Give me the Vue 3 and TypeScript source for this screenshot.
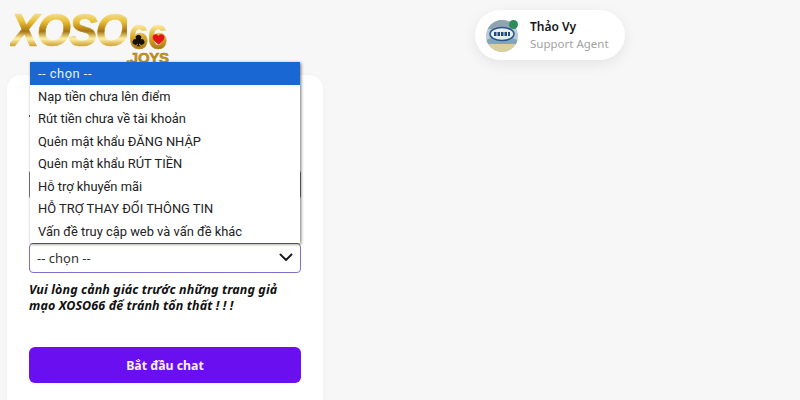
<script setup lang="ts">
const options: string[] = [
  '-- chọn --',
  'Nạp tiền chưa lên điểm',
  'Rút tiền chưa về tài khoản',
  'Quên mật khẩu ĐĂNG NHẬP',
  'Quên mật khẩu RÚT TIỀN',
  'Hỗ trợ khuyến mãi',
  'HỖ TRỢ THAY ĐỔI THÔNG TIN',
  'Vấn đề truy cập web và vấn đề khác',
]
</script>

<template>
  <div class="page">
    <section class="left">
      <div class="logo">
        <span class="six">66</span>
        <span class="xoso">XOSO</span>
        <svg class="suit club" viewBox="0 0 20 20"><path d="M10 1a4.400 4.400 0 0 0-3.600 7A4.400 4.400 0 1 0 9 14.500C8.800 16.500 8 18 6.500 19h7C12 18 11.200 16.500 11 14.500A4.400 4.400 0 1 0 13.600 8 4.400 4.400 0 0 0 10 1z" fill="#15110a"/></svg>
        <svg class="suit heart" viewBox="0 0 20 20"><path d="M10 18C4 13 1 10 1 6.500 1 3.500 3.300 2 5.500 2 7.500 2 9 3 10 5c1-2 2.500-3 4.500-3C16.700 2 19 3.500 19 6.500 19 10 16 13 10 18z" fill="#e5141c"/></svg>
        <span class="joys">.JOYS</span>
      </div>

      <form class="card">
        <div class="hidden-input"></div>
        <div class="label-stub"></div>
        <div class="select">
          <span>-- chọn --</span>
          <svg viewBox="0 0 16 16" class="chev"><path d="M2.500 5.500 8 11l5.500-5.500" fill="none" stroke="#1a1a1a" stroke-width="1.900" stroke-linecap="round" stroke-linejoin="round"/></svg>
        </div>
        <p class="warn">Vui lòng cảnh giác trước những trang giả mạo XOSO66 để tránh tổn thất ! ! !</p>
        <button type="button" class="start">Bắt đầu chat</button>
      </form>

      <ul class="dropdown">
        <li v-for="(o, i) in options" :key="o" :class="{ active: i === 0 }">{{ o }}</li>
      </ul>
    </section>

    <section class="right">
      <div class="agent">
        <div class="avatar">
          <svg viewBox="0 0 32 32" class="avatar-img">
            <defs><clipPath id="av"><circle cx="16" cy="16" r="16"/></clipPath></defs>
            <g clip-path="url(#av)">
              <rect width="32" height="32" fill="#b8ccd6"/>
              <path d="M0 0h32v9H0z" fill="#8fa4b0"/>
              <path d="M0 22h32v10H0z" fill="#d9cf9f"/>
              <path d="M0 20c8-4 22-4 32 0v4H0z" fill="#7fa6bd"/>
              <ellipse cx="16" cy="14" rx="12" ry="6.500" fill="#e9edf0" stroke="#27558f" stroke-width="1.500"/>
              <path d="M8 14h16" stroke="#1f4a86" stroke-width="4" stroke-dasharray="2.500 1"/>
            </g>
          </svg>
          <span class="online"></span>
        </div>
        <div class="agent-text">
          <div class="agent-name">Thảo Vy</div>
          <div class="agent-role">Support Agent</div>
        </div>
      </div>
    </section>
  </div>
</template>

<style>
html, body { margin: 0; background: #f7f7f7; }
</style>

<style scoped>
.page {
  width: 800px;
  height: 400px;
  overflow: hidden;
  display: flex;
  background: #f7f7f7;
  font-family: "Noto Sans", "Open Sans", sans-serif;
  color: #1c1c1c;
}
.left {
  position: relative;
  width: 330px;
  padding: 75px 7px 0;
  box-sizing: border-box;
}
.logo {
  position: absolute;
  left: 11px;
  top: 9px;
  width: 160px;
  height: 56px;
}
.xoso {
  position: absolute;
  left: -1px;
  top: -2px;
  font: italic 900 44px/44px "Liberation Sans", sans-serif;
  letter-spacing: -2.500px;
  -webkit-text-stroke: 0.600px transparent;
  transform: scaleY(1.06);
  transform-origin: left top;
  background: linear-gradient(180deg, #f4e6a0 10%, #e8bd34 32%, #a87410 52%, #fff2a8 68%, #c08a18 88%);
  -webkit-background-clip: text;
  background-clip: text;
  color: transparent;
}
.six {
  position: absolute;
  left: 118px;
  top: 15px;
  font: 900 35px/26px "Liberation Sans", sans-serif;
  letter-spacing: -0.500px;
  -webkit-text-stroke: 0.600px transparent;
  background: linear-gradient(180deg, #fff0a8 0%, #d9a928 50%, #a87410 100%);
  -webkit-background-clip: text;
  background-clip: text;
  color: transparent;
}
.suit { position: absolute; width: 13px; height: 13px; }
.club { left: 121px; top: 25px; }
.heart { left: 141px; top: 24px; }
.joys {
  position: absolute;
  left: 115px;
  top: 43px;
  font: 700 15px/12px "Liberation Sans", sans-serif;
  letter-spacing: -0.300px;
  -webkit-text-stroke: 0.500px #a87a18;
  color: #c4942a;
}
.card {
  position: relative;
  height: 340px;
  width: 316px;
  box-sizing: border-box;
  padding: 168px 22px 0;
  background: #fff;
  border-radius: 14px;
  box-shadow: 0 0 4px rgba(0, 0, 0, 0.03);
  display: flex;
  flex-direction: column;
}
.hidden-input {
  position: absolute;
  left: 22px;
  top: 95px;
  width: 272px;
  height: 29px;
  box-sizing: border-box;
  border: 1px solid #777;
  border-radius: 3px;
}
.label-stub {
  position: absolute;
  left: 22px;
  top: 40px;
  width: 5px;
  height: 66px;
  border-top: 2px solid #555;
  box-sizing: border-box;
}
.select {
  height: 30px;
  box-sizing: border-box;
  border: 1px solid #7d72c8;
  border-radius: 4px;
  padding: 0 7px;
  display: flex;
  align-items: center;
  justify-content: space-between;
  font-size: 13px;
  background: #fff;
  color: #333;
}
.chev { width: 16px; height: 16px; margin-top: -2px; margin-right: -1px; }
.warn {
  margin: 9px 0 0;
  font-size: 12.500px;
  line-height: 16px;
  font-weight: 700;
  font-style: italic;
  color: #111;
  letter-spacing: 0.100px;
}
.start {
  margin-top: 33px;
  height: 36px;
  border: none;
  border-radius: 6px;
  background: #6a0ff0;
  color: #fbeefe;
  font: 700 12.300px "Noto Sans", sans-serif;
  padding: 0;
}
.dropdown {
  position: absolute;
  left: 30px;
  top: 62px;
  width: 270px;
  height: 181px;
  margin: 0;
  padding: 0;
  list-style: none;
  background: #fff;
  box-shadow: 1px 1px 3px rgba(0, 0, 0, 0.55);
  font: 12.900px Roboto, sans-serif;
}
.dropdown li {
  height: 22.500px;
  line-height: 23.500px;
  padding-left: 8px;
  white-space: nowrap;
  color: #222;
}
.dropdown li.active { background: #1867d2; color: #e8f0fb; letter-spacing: 0.500px; }
.right {
  flex: 1;
  padding: 10px 0 0 145px;
}
.agent {
  width: 150px;
  height: 50px;
  box-sizing: border-box;
  border-radius: 25px;
  background: #fff;
  box-shadow: 0 4px 14px rgba(0, 0, 0, 0.08);
  display: flex;
  align-items: center;
  padding: 2px 0 0 11px;
  gap: 12px;
}
.avatar { position: relative; width: 32px; height: 32px; flex: none; }
.avatar-img { width: 32px; height: 32px; display: block; }
.online {
  position: absolute;
  right: 0;
  top: 0;
  width: 9px;
  height: 9px;
  border-radius: 50%;
  background: #2e8b57;
}
.agent-text { margin-top: -2px; }
.agent-name { font-size: 12px; line-height: 16px; font-weight: 600; color: #151515; }
.agent-role { font-size: 11.500px; line-height: 16px; color: #a3a3a3; margin-top: 1px; white-space: nowrap; }
</style>
